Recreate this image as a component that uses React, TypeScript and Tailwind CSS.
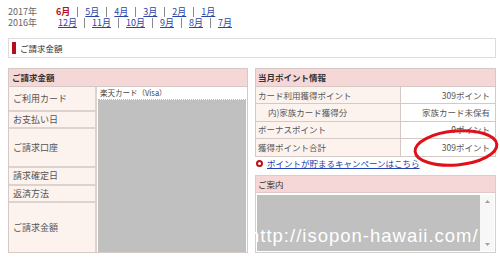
import React from 'react';

const months2017 = ['5月', '4月', '3月', '2月', '1月'];
const months2016 = ['12月', '11月', '10月', '9月', '8月', '7月'];

const Sep = () => <span className="inline-block w-px h-[10px] bg-[#8a8a8a] mx-[7px]" />;

const leftRows = [
  { label: 'ご利用カード', h: 'h-[25px]' },
  { label: 'お支払い日', h: 'h-[17px]' },
  { label: 'ご請求口座', h: 'h-[39px]' },
  { label: '請求確定日', h: 'h-[18px]' },
  { label: '返済方法', h: 'h-[17px]' },
  { label: 'ご請求金額', h: 'h-[49px]' },
];

const pointRows = [
  { label: 'カード利用獲得ポイント', value: '309ポイント', indent: false },
  { label: '内)家族カード獲得分', value: '家族カード未保有', indent: true },
  { label: 'ボーナスポイント', value: '0ポイント', indent: false },
  { label: '獲得ポイント合計', value: '309ポイント', indent: false },
];

export default function App() {
  return (
    <div className="relative w-[500px] h-[262px] overflow-hidden bg-white pt-[6px] font-['Noto_Sans_CJK_JP','Noto_Sans',sans-serif] text-[8.5px] text-[#555]">
      {/* month navigation */}
      <div className="pl-[8px] text-[9px] leading-[11px]">
        <div className="flex items-center h-[11px]">
          <span className="w-[48px] text-[#666]">2017年</span>
          <span className="font-bold text-[#b3141c]">6月</span>
          {months2017.map((m) => (
            <React.Fragment key={m}>
              <Sep />
              <a className="text-[#2b45a6] underline">{m}</a>
            </React.Fragment>
          ))}
        </div>
        <div className="flex items-center h-[11px]">
          <span className="w-[50px] text-[#666]">2016年</span>
          {months2016.map((m, i) => (
            <React.Fragment key={m}>
              {i > 0 && <Sep />}
              <a className="text-[#2b45a6] underline">{m}</a>
            </React.Fragment>
          ))}
        </div>
      </div>

      {/* section title */}
      <div className="mt-[10px] ml-[8px] w-[488px] h-[20px] border border-[#dcdcdc] flex items-center">
        <span className="ml-[3px] w-[4px] h-[12px] bg-[#b3101a]" />
        <span className="ml-[4px] text-[#333]">ご請求金額</span>
      </div>

      <div className="mt-[10px] ml-[8px] flex gap-[7px] items-stretch">
        {/* billing table */}
        <div className="w-[240px] border border-[#d6c8c4] flex flex-col">
          <div className="h-[18px] bg-[#f6d7d7] border-b border-[#d6c8c4] px-[3px] flex items-center font-bold text-[#333]">
            ご請求金額
          </div>
          <div className="flex">
            <div className="w-[88px] flex flex-col border-r-2 border-[#ddd2ce]">
              {leftRows.map((r, i) => (
                <div
                  key={r.label}
                  className={`${r.h} bg-[#fcf2ee] px-[4px] flex items-center text-[9px] ${i < leftRows.length - 1 ? 'border-b-2 border-[#ddd2ce]' : ''}`}
                >
                  {r.label}
                </div>
              ))}
            </div>
            <div className="flex-1 flex flex-col bg-white pl-[1px] pr-[1px]">
              <div className="h-[13px] px-[2px] flex items-center text-[7.5px] text-[#444] border-b border-dotted border-[#bbb]">
                楽天カード（Visa）
              </div>
              <div className="flex-1 bg-[#c0c0c0]" />
            </div>
          </div>
        </div>

        {/* points */}
        <div className="w-[241px] flex flex-col">
          <div className="border border-[#d6c8c4]">
            <div className="h-[18px] bg-[#f6d7d7] border-b border-[#d6c8c4] px-[2px] flex items-center font-bold text-[#333]">
              当月ポイント情報
            </div>
            {pointRows.map((r, i) => (
              <div
                key={r.label}
                className={`flex h-[17.25px] ${i < pointRows.length - 1 ? 'border-b border-[#d6c8c4]' : ''}`}
              >
                <div className={`w-[145px] bg-[#fcf2ee] border-r border-[#d6c8c4] flex items-center ${r.indent ? 'pl-[12px]' : 'pl-[2px]'}`}>
                  {r.label}
                </div>
                <div className="flex-1 bg-white flex items-center justify-end pr-[5px]">{r.value}</div>
              </div>
            ))}
          </div>

          <div className="h-[13px] flex items-center pl-[1px]">
            <span className="w-[7px] h-[7px] rounded-full border-2 border-[#c0101a] bg-white mr-[4px]" />
            <a className="text-[#2340b0] underline">ポイントが貯まるキャンペーンはこちら</a>
          </div>

          <div className="mt-[5px] flex-1 border border-[#d0d0d0] flex flex-col">
            <div className="h-[17px] bg-[#f6d7d7] border-b border-[#e2c8c8] px-[2px] flex items-center text-[#333]">
              ご案内
            </div>
            <div className="flex-1 flex p-[1px] pt-[2px]">
              <div className="flex-1 bg-[#c0c0c0]" />
              <div className="w-[14px] bg-[#f7f7f7] flex flex-col items-center justify-between py-[5px]">
                <svg width="5" height="3" viewBox="0 0 5 3">
                  <path d="M0 3 L2.5 0 L5 3 Z" fill="#a0a0a0" />
                </svg>
                <svg width="5" height="3" viewBox="0 0 5 3">
                  <path d="M0 0 L2.5 3 L5 0 Z" fill="#a0a0a0" />
                </svg>
              </div>
            </div>
          </div>
        </div>
      </div>

      {/* red highlight ellipse */}
      <svg className="absolute left-[412px] top-[127px]" width="90" height="42" viewBox="0 0 90 42">
        <ellipse cx="44" cy="21" rx="41" ry="17" fill="none" stroke="#e0101a" strokeWidth="3" transform="rotate(-5 44 21)" />
      </svg>

      {/* watermark */}
      <div className="absolute left-[249px] top-[227px] font-['Liberation_Sans',sans-serif] text-[18.5px] leading-none tracking-[1px] text-white">
        http://isopon-hawaii.com/
      </div>
    </div>
  );
}
